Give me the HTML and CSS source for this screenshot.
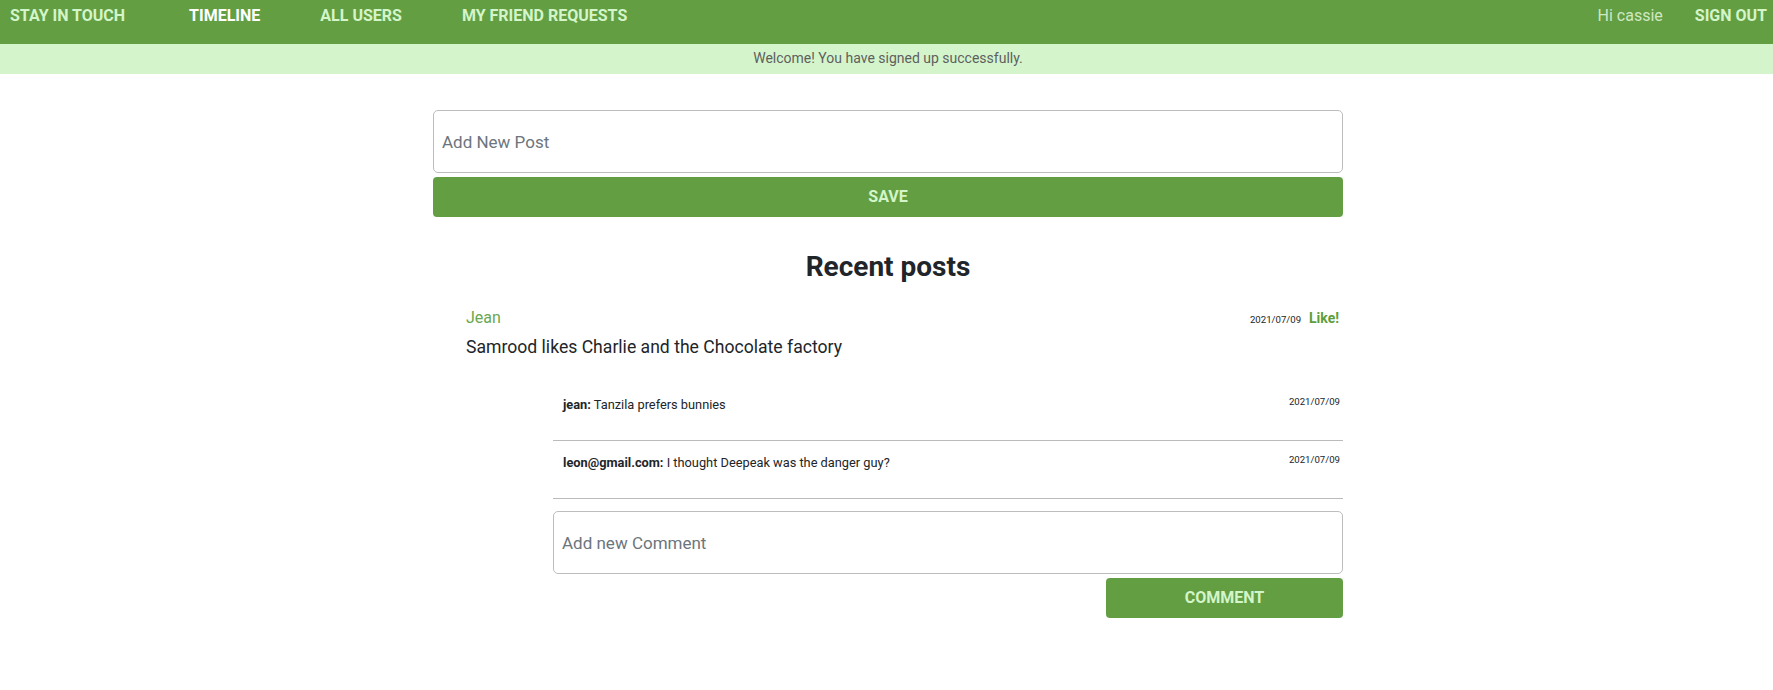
FILE: index.html
```html
<!DOCTYPE html>
<html lang="en">
<head>
<meta charset="utf-8">
<title>Stay In Touch</title>
<link rel="stylesheet" href="styles.css">
</head>
<body>
<nav class="navbar">
  <div class="nav-left">
    <a class="brand" href="#">STAY IN TOUCH</a>
    <a class="nav-link active" href="#">TIMELINE</a>
    <a class="nav-link" href="#">ALL USERS</a>
    <a class="nav-link" href="#">MY FRIEND REQUESTS</a>
  </div>
  <div class="nav-right">
    <span class="greeting">Hi cassie</span>
    <a class="nav-link" href="#">SIGN OUT</a>
  </div>
</nav>
<div class="notice">Welcome! You have signed up successfully.</div>
<main class="timeline">
  <form class="post-form">
    <input class="field" type="text" placeholder="Add New Post">
    <button class="btn btn-save" type="button">SAVE</button>
  </form>
  <h2 class="section-title">Recent posts</h2>
  <article class="post">
    <div class="post-content">
      <div class="post-head">
        <a class="author" href="#">Jean</a>
        <div class="post-meta">
          <span class="date">2021/07/09</span>
          <a class="like" href="#">Like!</a>
        </div>
      </div>
      <p class="post-body">Samrood likes Charlie and the Chocolate factory</p>
    </div>
    <div class="comments">
      <div class="comment">
        <p class="comment-text"><strong>jean:</strong> Tanzila prefers bunnies</p>
        <span class="date">2021/07/09</span>
      </div>
      <div class="comment">
        <p class="comment-text"><strong>leon@gmail.com:</strong> I thought Deepeak was the danger guy?</p>
        <span class="date">2021/07/09</span>
      </div>
      <form class="comment-form">
        <input class="field" type="text" placeholder="Add new Comment">
        <button class="btn btn-comment" type="button">COMMENT</button>
      </form>
    </div>
  </article>
</main>
</body>
</html>
```

FILE: styles.css
```css
* {
  box-sizing: border-box;
}

body {
  margin: 0;
  font-family: Roboto, "Liberation Sans", Arial, sans-serif;
  color: #212529;
  background: #ffffff;
}

a {
  text-decoration: none;
}

.navbar {
  display: flex;
  justify-content: space-between;
  align-items: flex-start;
  height: 44px;
  padding: 4px 6px 0 10px;
  background: #639e43;
  line-height: 24px;
  font-size: 16px;
}

.nav-left,
.nav-right {
  display: flex;
  align-items: center;
}

.nav-left {
  gap: 60px;
}

.brand {
  font-weight: 700;
  color: #d4f5c9;
  margin-right: 4px;
}

.nav-link {
  font-weight: 700;
  color: #d4f5c9;
}

.nav-link.active {
  color: #ffffff;
}

.nav-right {
  gap: 32px;
}

.greeting {
  color: #cfe8c2;
}

.notice {
  height: 30px;
  padding: 2px 0 0 3px;
  line-height: 24px;
  font-size: 14px;
  text-align: center;
  color: #5f5f5f;
  background: #d4f5cb;
}

.timeline {
  width: 910px;
  margin: 36px 0 0 calc(50% - 453.5px);
}

.post-form,
.comment-form {
  display: flex;
  flex-direction: column;
}

.field {
  display: block;
  width: 100%;
  height: 63px;
  padding: 0 8px;
  border: 1px solid #bdbdbd;
  border-radius: 5px;
  font-family: inherit;
  font-size: 17px;
  color: #212529;
  background: #ffffff;
}

.field::placeholder {
  color: #6c757d;
}

.btn {
  height: 40px;
  margin-top: 4px;
  padding-bottom: 2px;
  border: none;
  border-radius: 4px;
  background: #639e43;
  color: #d4f5c9;
  font-family: inherit;
  font-size: 16px;
  font-weight: 700;
  cursor: pointer;
}

.btn-save {
  width: 100%;
}

.btn-comment {
  width: 30%;
  align-self: flex-end;
}

.section-title {
  margin: 33px 0 22px;
  font-size: 28px;
  line-height: 34px;
  font-weight: 700;
  text-align: center;
  color: #212529;
}

.post-content {
  padding: 0 4px 0 33px;
}

.post-head {
  display: flex;
  justify-content: space-between;
  align-items: baseline;
  line-height: 24px;
}

.author {
  font-size: 16px;
  color: #6aa84f;
}

.post-meta {
  display: flex;
  align-items: baseline;
  gap: 8px;
}

.date {
  font-size: 9.6px;
  line-height: 14.4px;
  color: #212529;
}

.like {
  font-size: 14px;
  font-weight: 700;
  color: #5c9e3c;
}

.post-body {
  margin: 4px 0 22px;
  font-size: 17.6px;
  line-height: 27px;
}

.comments {
  margin-left: 120px;
}

.comment {
  display: flex;
  justify-content: space-between;
  align-items: flex-start;
  padding: 12px 3px 25px 10px;
  border-bottom: 1px solid #bbbbbb;
}

.comment-text {
  margin: 0;
  font-size: 12.8px;
  line-height: 20px;
}

.comment-text strong {
  font-weight: 700;
}

.comment-form {
  margin-top: 12px;
}
```
